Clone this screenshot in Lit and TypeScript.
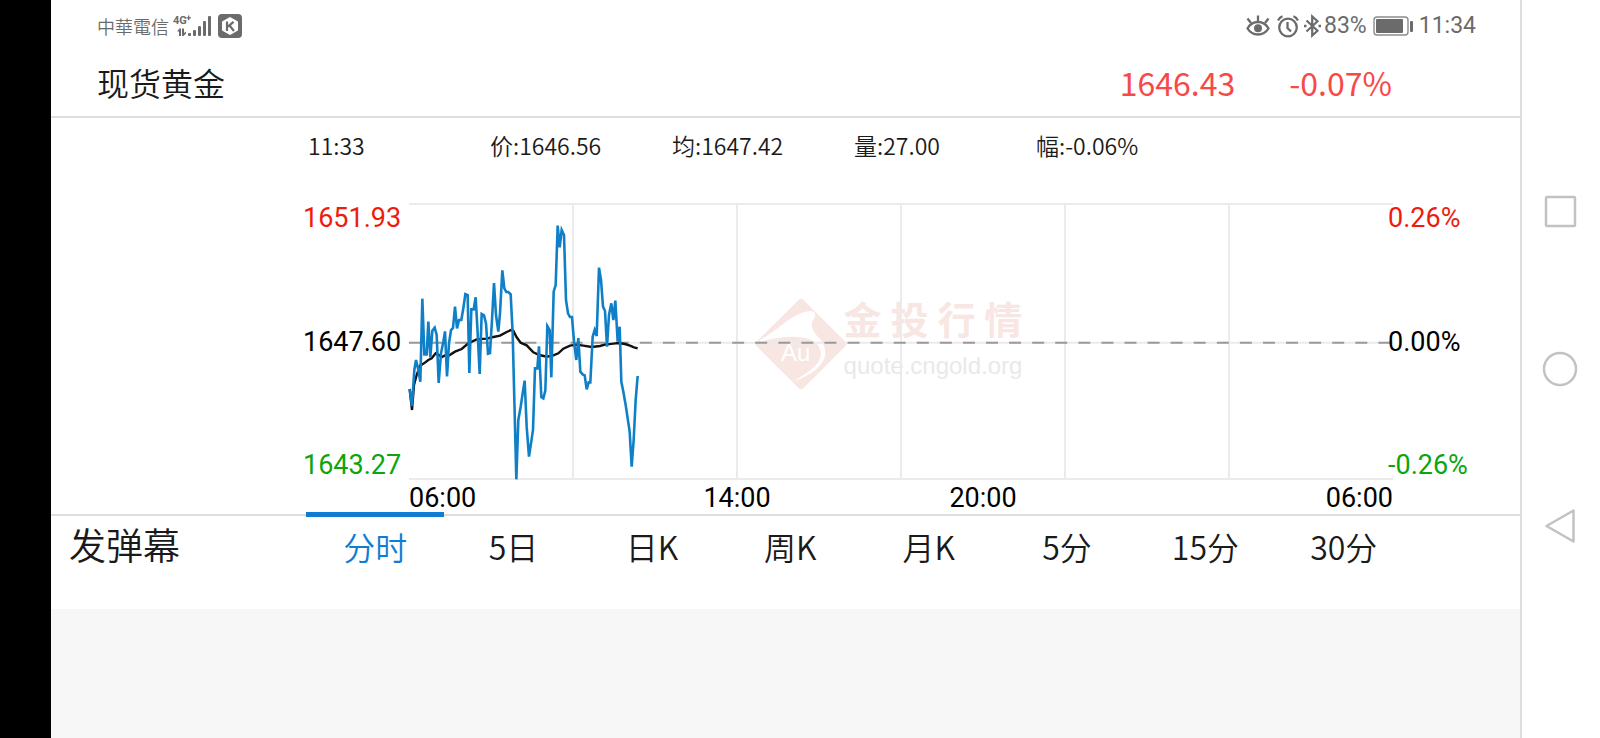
import { LitElement, html, css, svg } from "lit";
import { customElement, property, state } from "lit/decorators.js";

/* Series are kept in chart units: 2952 wide (24 hours) by 825 tall. */
const PRICE =
  "29,567 36,618 43,510 48,480 54,505 61,545 67,296 73,463 80,463 85,365 91,472 97,392 104,383 110,405 116,549 123,460 130,425 135,394 141,529 147,430 153,390 159,384 165,320 171,385 177,360 184,360 190,325 196,282 203,285 208,519 214,328 221,328 227,292 233,400 239,522 245,342 252,346 258,370 264,461 270,459 276,360 282,249 288,345 295,395 300,340 307,211 313,265 319,276 325,276 332,283 338,400 349,838 355,660 362,620 368,580 374,542 380,680 387,770 393,730 399,690 405,505 412,505 417,439 424,591 430,595 436,572 442,378 449,390 454,532 461,275 467,255 473,77 479,142 485,90 492,105 498,300 504,340 510,351 516,351 522,425 529,480 535,414 541,515 548,523 554,526 560,568 566,547 571,547 578,410 584,390 590,408 597,203 603,240 609,320 615,333 621,440 627,345 634,310 640,360 646,302 653,425 659,380 664,545 670,575 677,615 683,655 689,695 695,800 701,720 707,600 713,528";
const AVERAGE =
  "29,567 36,630 42,555 50,525 60,497 72,490 85,480 95,475 107,460 118,466 125,471 135,466 148,466 165,455 185,447 205,430 230,418 260,416 280,411 300,407 320,396 333,390 340,392 350,412 362,428 380,436 400,457 418,465 440,470 460,466 475,460 490,446 510,437 530,434 550,437 575,441 600,438 615,434 640,431 655,429 675,432 690,437 702,442 713,445";

@customElement("status-bar")
class StatusBar extends LitElement {
  static styles = css`
    :host {
      display: flex;
      justify-content: space-between;
      align-items: center;
      height: 52px;
      padding: 0 44px 0 46px;
      color: #6b6b6b;
      font: 23px/28px Roboto, sans-serif;
    }
    .side { display: flex; align-items: center; }
    .carrier { font: 350 18px/24px "Noto Sans CJK TC", sans-serif; color: #6b6b6b; margin-right: 4px; }
    .badge { margin-left: 6px; }
    .alarm { margin-left: 7px; }
    .bluetooth { margin: 0 1px 0 5px; }
    .battery { margin: 0 6px; }
    svg { display: block; }
    .net { font: 700 11px Roboto, sans-serif; }
  `;
  render() {
    return html`
      <div class="side">
        <span class="carrier">中華電信</span>
        <svg width="39" height="24" viewBox="0 0 39 24" fill="#6b6b6b">
          <text class="net" x="0" y="10">4G</text>
          <path d="M15 1.500h1.300v1.700h1.700v1.300h-1.700v1.700H15V4.500h-1.700V3.200H15z" />
          <path d="M4 17.500 6.500 14.500H8V22H6V17.500zM9 14.500h2V19l2-1.500v2L10.500 22H9z" />
          <rect x="15" y="19" width="3" height="3" rx="1" />
          <rect x="20" y="16" width="3" height="6" rx="1" />
          <rect x="25" y="12" width="3" height="10" rx="1" />
          <rect x="30" y="7" width="3" height="15" rx="1" />
          <rect x="35" y="2" width="3" height="20" rx="1" />
        </svg>
        <svg class="badge" width="24" height="24" viewBox="0 0 24 24">
          <rect width="24" height="24" rx="4" fill="#6b6b6b" />
          <path d="M12 4 19 8V16L12 20 5 16V8z" fill="#fff" stroke="#fff" stroke-width="2" stroke-linejoin="round" />
          <path d="M9 7.500V17M15.500 7.800 10 12.600M11.500 11.500 16 17" fill="none" stroke="#6b6b6b" stroke-width="2.200" />
        </svg>
      </div>
      <div class="side">
        <svg width="24" height="24" viewBox="0 0 24 24" fill="none" stroke="#6b6b6b" stroke-width="2.300">
          <path d="M1.500 14.500C4 10 8 8 12 8S20 10 22.500 14.500C20 18.500 16 20.500 12 20.500S4 18.500 1.500 14.500z" />
          <path d="M12 7V1.500M5 9 1.500 4.500M19 9 22.500 4.500" />
          <circle cx="12" cy="14.200" r="4" fill="#6b6b6b" stroke="none" />
        </svg>
        <svg class="alarm" width="22" height="24" viewBox="0 0 22 24" fill="none" stroke="#6b6b6b" stroke-width="2.300">
          <circle cx="11" cy="13.500" r="8.800" />
          <path d="M10.500 8V14L14 17.500M1 6.500C2 4.500 3.500 3 5.500 2.200M21 6.500C20 4.500 18.500 3 16.500 2.200" />
        </svg>
        <svg class="bluetooth" width="19" height="24" viewBox="0 0 19 24" fill="none" stroke="#6b6b6b" stroke-width="2.200">
          <path d="M2.500 6.500 13.500 16.800 8.200 21.500V2.500L13.500 7.200 2.500 17.500" />
          <path d="M0 12h2.500M14.500 12h2.500" stroke-width="2.500" />
        </svg>
        <span>83%</span>
        <svg class="battery" width="40" height="20" viewBox="0 0 40 20">
          <rect x="1" y="1" width="34" height="18" rx="3" fill="none" stroke="#8c8c8c" stroke-width="1.400" />
          <rect x="3" y="3" width="27" height="14" rx="1" fill="#6b6b6b" />
          <rect x="37" y="5" width="3" height="11" rx="1" fill="#6b6b6b" />
        </svg>
        <span>11:34</span>
      </div>
    `;
  }
}

@customElement("price-chart")
class PriceChart extends LitElement {
  static styles = css`
    :host {
      display: grid;
      grid-template-columns: 106px minmax(0, 1fr) 127px;
      grid-template-rows: 275px 35px;
      padding: 28px 0 0 252px;
      color: #000;
      font: 27px/28px Roboto, sans-serif;
    }
    .scale { display: flex; flex-direction: column; justify-content: space-between; z-index: 1; }
    .change { margin-left: -5px; }
    .up { color: #ee1c0c; }
    .down { color: #0ca50c; }
    .plot { position: relative; display: grid; }
    .lines { width: 100%; height: 100%; overflow: visible; display: block; position: relative; }
    .lines * { vector-effect: non-scaling-stroke; }
    .times {
      grid-column: 2;
      display: grid;
      grid-template-columns: repeat(24, minmax(0, 1fr));
      line-height: 38px;
      text-align: center;
    }
    .t0 { grid-column: 1 / 5; text-align: left; }
    .t8 { grid-column: 7 / 11; }
    .t14 { grid-column: 13 / 17; }
    .t24 { grid-column: 21 / 25; text-align: right; }
    .mark {
      position: absolute;
      inset: 0;
      display: flex;
      align-items: center;
      justify-content: center;
      padding: 4px 24px 0 0;
    }
    .logo { overflow: visible; margin-right: -2px; }
    .au { font: 24px "Liberation Sans", sans-serif; }
    .words { display: flex; flex-direction: column; gap: 16px; padding-bottom: 8px; }
    .brand {
      display: flex;
      justify-content: space-between;
      color: #f8e6e3;
      font: 700 38px/36px "Noto Sans CJK SC", sans-serif;
    }
    .domain { color: #e9e9e9; font: 24px/28px "Liberation Sans", sans-serif; }
  `;
  render() {
    return html`
      <div class="scale"><span class="up">1651.93</span><span>1647.60</span><span class="down">1643.27</span></div>
      <div class="plot">
        <div class="mark">
          <svg class="logo" width="90" height="90" viewBox="0 0 90 90">
            <rect x="12" y="12" width="66" height="66" rx="4" transform="rotate(45 45 45)" fill="#f8e6e3" />
            <path d="M4 41C24 30 36 14 54 12C58 12 60 14 59 18C53 25 56 32 64 40C78 58 62 74 38 82C58 70 68 62 64 50C60 37 34 34 4 43z" fill="#fff" />
            <text class="au" x="25" y="62" fill="#fff">Au</text>
          </svg>
          <div class="words">
            <div class="brand"><span>金</span><span>投</span><span>行</span><span>情</span></div>
            <div class="domain">quote.cngold.org</div>
          </div>
        </div>
        <svg class="lines" viewBox="0 0 2952 825" preserveAspectRatio="none" fill="none">
          <path d="M0 0H2952M0 825H2952M0 416H2952" stroke="#ebebeb" stroke-width="2" />
          ${[1, 2, 3, 4, 5].map((i) => svg`<path d="M${i * 492} 0V825" stroke="#ebebeb" stroke-width="2" />`)}
          <path d="M0 416H2952" stroke="#999" stroke-width="2" stroke-dasharray="12 11.080" />
          <g transform="translate(-27 -12)">
            <polyline points=${AVERAGE} stroke="#111" stroke-width="2.400" />
            <polyline points=${PRICE} stroke="#0f80c8" stroke-width="2.600" />
          </g>
        </svg>
      </div>
      <div class="scale change"><span class="up">0.26%</span><span>0.00%</span><span class="down">-0.26%</span></div>
      <div class="times">
        <span class="t0">06:00</span><span class="t8">14:00</span><span class="t14">20:00</span><span class="t24">06:00</span>
      </div>
    `;
  }
}

@customElement("period-tabs")
class PeriodTabs extends LitElement {
  @state() active = 0;
  private periods = ["分时", "5日", "日K", "周K", "月K", "5分", "15分", "30分"];
  static styles = css`
    :host {
      display: flex;
      height: 93px;
      border-top: 2px solid #dedede;
      font: 350 32px/48px "Noto Sans CJK SC", sans-serif;
    }
    button {
      position: relative;
      border: 0;
      margin: 0;
      padding: 6px 0 0;
      background: none;
      color: #1a1a1a;
      font: inherit;
      height: 54px;
    }
    .send { width: 255px; padding: 2px 0 0 18px; text-align: left; font-size: 37px; }
    .tabs { flex: 1; display: grid; grid-template-columns: repeat(8, minmax(0, 1fr)); margin-right: 107px; }
    .on { color: #0f7dd4; }
    .on::before { content: ""; position: absolute; left: 0; right: 0; top: -4px; height: 5px; background: #0f7dd4; }
  `;
  render() {
    return html`
      <button class="send">发弹幕</button>
      <div class="tabs" role="tablist">
        ${this.periods.map(
          (p, i) => html`<button
            role="tab"
            aria-selected=${i === this.active}
            class=${i === this.active ? "on" : ""}
            @click=${() => (this.active = i)}
          >${p}</button>`
        )}
      </div>
    `;
  }
}

@customElement("app-root")
class AppRoot extends LitElement {
  @property() name = "现货黄金";
  static styles = css`
    :host {
      display: flex;
      min-height: 100vh;
      background: #fff;
      color: #1a1a1a;
      font: 350 32px/48px "Noto Sans CJK SC", sans-serif;
    }
    .notch { width: 51px; background: #000; }
    .screen { flex: 1; min-width: 0; display: flex; flex-direction: column; }
    .title {
      display: flex;
      align-items: center;
      height: 60px;
      padding: 0 128px 4px 46px;
      border-bottom: 2px solid #dedede;
    }
    h1 { flex: 1; margin: 0; font: inherit; }
    .quote { display: flex; gap: 54px; color: #f84848; font-weight: 400; }
    .info {
      display: grid;
      grid-template-columns: repeat(6, minmax(0, 1fr));
      padding: 0 120px 4px 257px;
      font-size: 23px;
      line-height: 54px;
    }
    .rest { flex: 1; background: #f7f7f7; }
    .nav {
      width: 78px;
      border-left: 2px solid #dedede;
      display: flex;
      flex-direction: column;
      align-items: center;
      justify-content: center;
      gap: 117px;
    }
    .nav button { border: 0; padding: 0; background: none; width: 40px; height: 40px; }
    .nav svg { display: block; }
  `;
  render() {
    const icon = (shape: unknown) =>
      html`<svg width="40" height="40" viewBox="0 0 40 40" fill="none" stroke="#c2c2c2" stroke-width="2.500" stroke-linejoin="round">${shape}</svg>`;
    return html`
      <div class="notch"></div>
      <main class="screen">
        <status-bar></status-bar>
        <header class="title">
          <h1>${this.name}</h1>
          <div class="quote"><span>1646.43</span><span>-0.07%</span></div>
        </header>
        <div class="info">
          <span>11:33</span><span>价:1646.56</span><span>均:1647.42</span><span>量:27.00</span><span>幅:-0.06%</span>
        </div>
        <price-chart></price-chart>
        <period-tabs></period-tabs>
        <div class="rest"></div>
      </main>
      <nav class="nav">
        <button aria-label="Recent">${icon(svg`<rect x="5" y="5" width="29" height="29" rx="1" />`)}</button>
        <button aria-label="Home">${icon(svg`<circle cx="19" cy="20" r="16" />`)}</button>
        <button aria-label="Back">${icon(svg`<path d="M5.500 20 32.500 4.500V35.500z" />`)}</button>
      </nav>
    `;
  }
}
